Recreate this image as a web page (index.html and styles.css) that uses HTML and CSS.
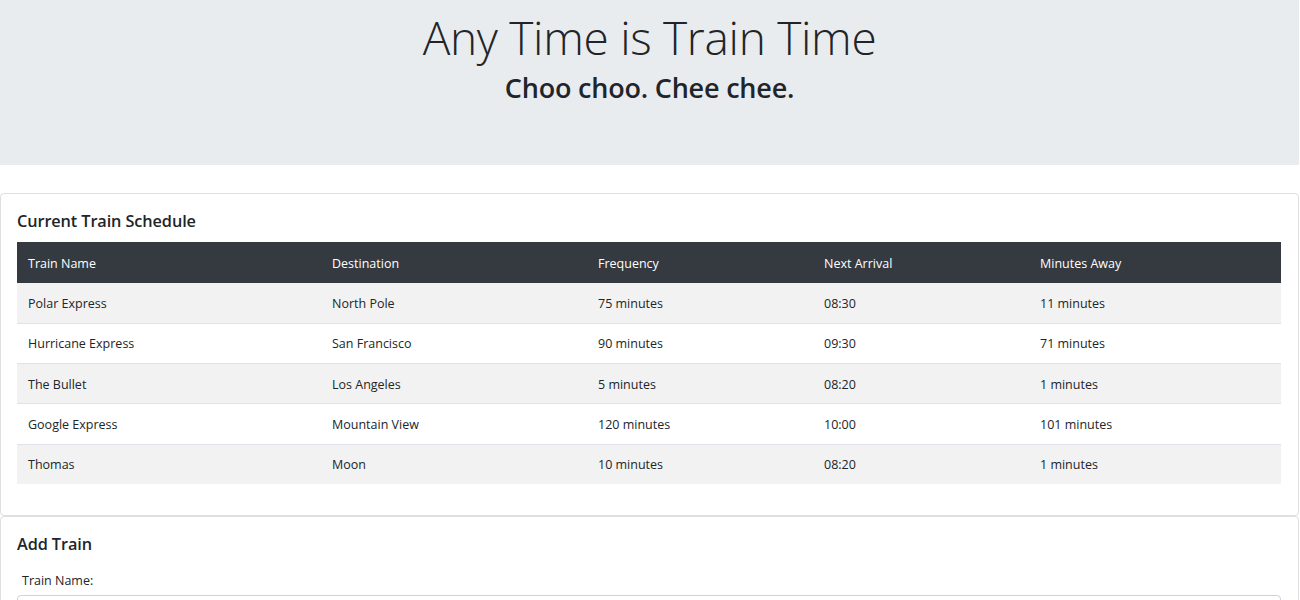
FILE: index.html
```
<!DOCTYPE html>
<html>
<head>
<meta charset="utf-8">
<link rel="stylesheet" href="styles.css">
</head>
<body>
<header class="jumbotron">
  <h1 class="display">Any Time is Train Time</h1>
  <h2 class="lead">Choo choo. Chee chee.</h2>
</header>
<section class="card">
  <div class="card-body">
    <h5 class="card-title">Current Train Schedule</h5>
    <table class="table">
      <colgroup>
        <col class="c1"><col class="c2"><col class="c3"><col class="c4"><col class="c5">
      </colgroup>
      <thead>
        <tr><th>Train Name</th><th>Destination</th><th>Frequency</th><th>Next Arrival</th><th>Minutes Away</th></tr>
      </thead>
      <tbody>
        <tr><td>Polar Express</td><td>North Pole</td><td>75 minutes</td><td>08:30</td><td>11 minutes</td></tr>
        <tr><td>Hurricane Express</td><td>San Francisco</td><td>90 minutes</td><td>09:30</td><td>71 minutes</td></tr>
        <tr><td>The Bullet</td><td>Los Angeles</td><td>5 minutes</td><td>08:20</td><td>1 minutes</td></tr>
        <tr><td>Google Express</td><td>Mountain View</td><td>120 minutes</td><td>10:00</td><td>101 minutes</td></tr>
        <tr><td>Thomas</td><td>Moon</td><td>10 minutes</td><td>08:20</td><td>1 minutes</td></tr>
      </tbody>
    </table>
  </div>
</section>
<section class="card">
  <div class="card-body">
    <h5 class="card-title">Add Train</h5>
    <form class="form">
      <label class="label" for="name">Train Name:</label>
      <input class="input" id="name" type="text">
    </form>
  </div>
</section>
</body>
</html>
```
FILE: styles.css
```
html, body {
  margin: 0;
  padding: 0;
}
body {
  font-family: "Open Sans", "Noto Sans", sans-serif;
  color: #212529;
  background: #fff;
  width: 1299px;
}
.jumbotron {
  background: #e9ecef;
  height: 165px;
  box-sizing: border-box;
  padding-top: 8px;
  text-align: center;
  margin-bottom: 28px;
}
.display {
  margin: 0;
  font-size: 46px;
  font-weight: 300;
  line-height: 58px;
  letter-spacing: -0.3px;
}
.lead {
  margin: 0;
  font-size: 27px;
  font-weight: 600;
  line-height: 44px;
  letter-spacing: -0.2px;
}
.card {
  border: 1px solid rgba(0,0,0,.125);
  border-radius: 4px;
}
.card-body {
  padding: 16px 16px 17px 16px;
}
.card-title {
  margin: 0 0 10px 0;
  font-size: 16.3px;
  font-weight: 600;
  line-height: 21px;
  letter-spacing: -0.1px;
  padding-top: 1px;
}
.table {
  width: 1264px;
  border-collapse: collapse;
  font-size: 12.5px;
  margin-bottom: 14px;
}
.c1 { width: 304px; }
.c2 { width: 266px; }
.c3 { width: 226px; }
.c4 { width: 216px; }
.c5 { width: 252px; }
.table th, .table td {
  text-align: left;
  padding: 1px 11px 0 11px;
  box-sizing: border-box;
  vertical-align: middle;
}
.table td {
  height: 40.25px;
  border-top: 1px solid #dee2e6;
}
.table th {
  background: #343a40;
  color: #fff;
  font-weight: 400;
  height: 41px;
}
.table tbody tr:nth-child(odd) td {
  background: #f2f2f2;
}
.table tbody tr:first-child td {
  border-top: none;
}
.form {
  display: flex;
  flex-direction: column;
}
.label {
  font-size: 12.5px;
  padding-left: 5px;
  margin: 7px 0 6px 0;
  line-height: 17px;
}
.input {
  height: 31px;
  border: 1px solid #ced4da;
  border-radius: 4px;
  box-sizing: border-box;
  width: 1264px;
}
```
